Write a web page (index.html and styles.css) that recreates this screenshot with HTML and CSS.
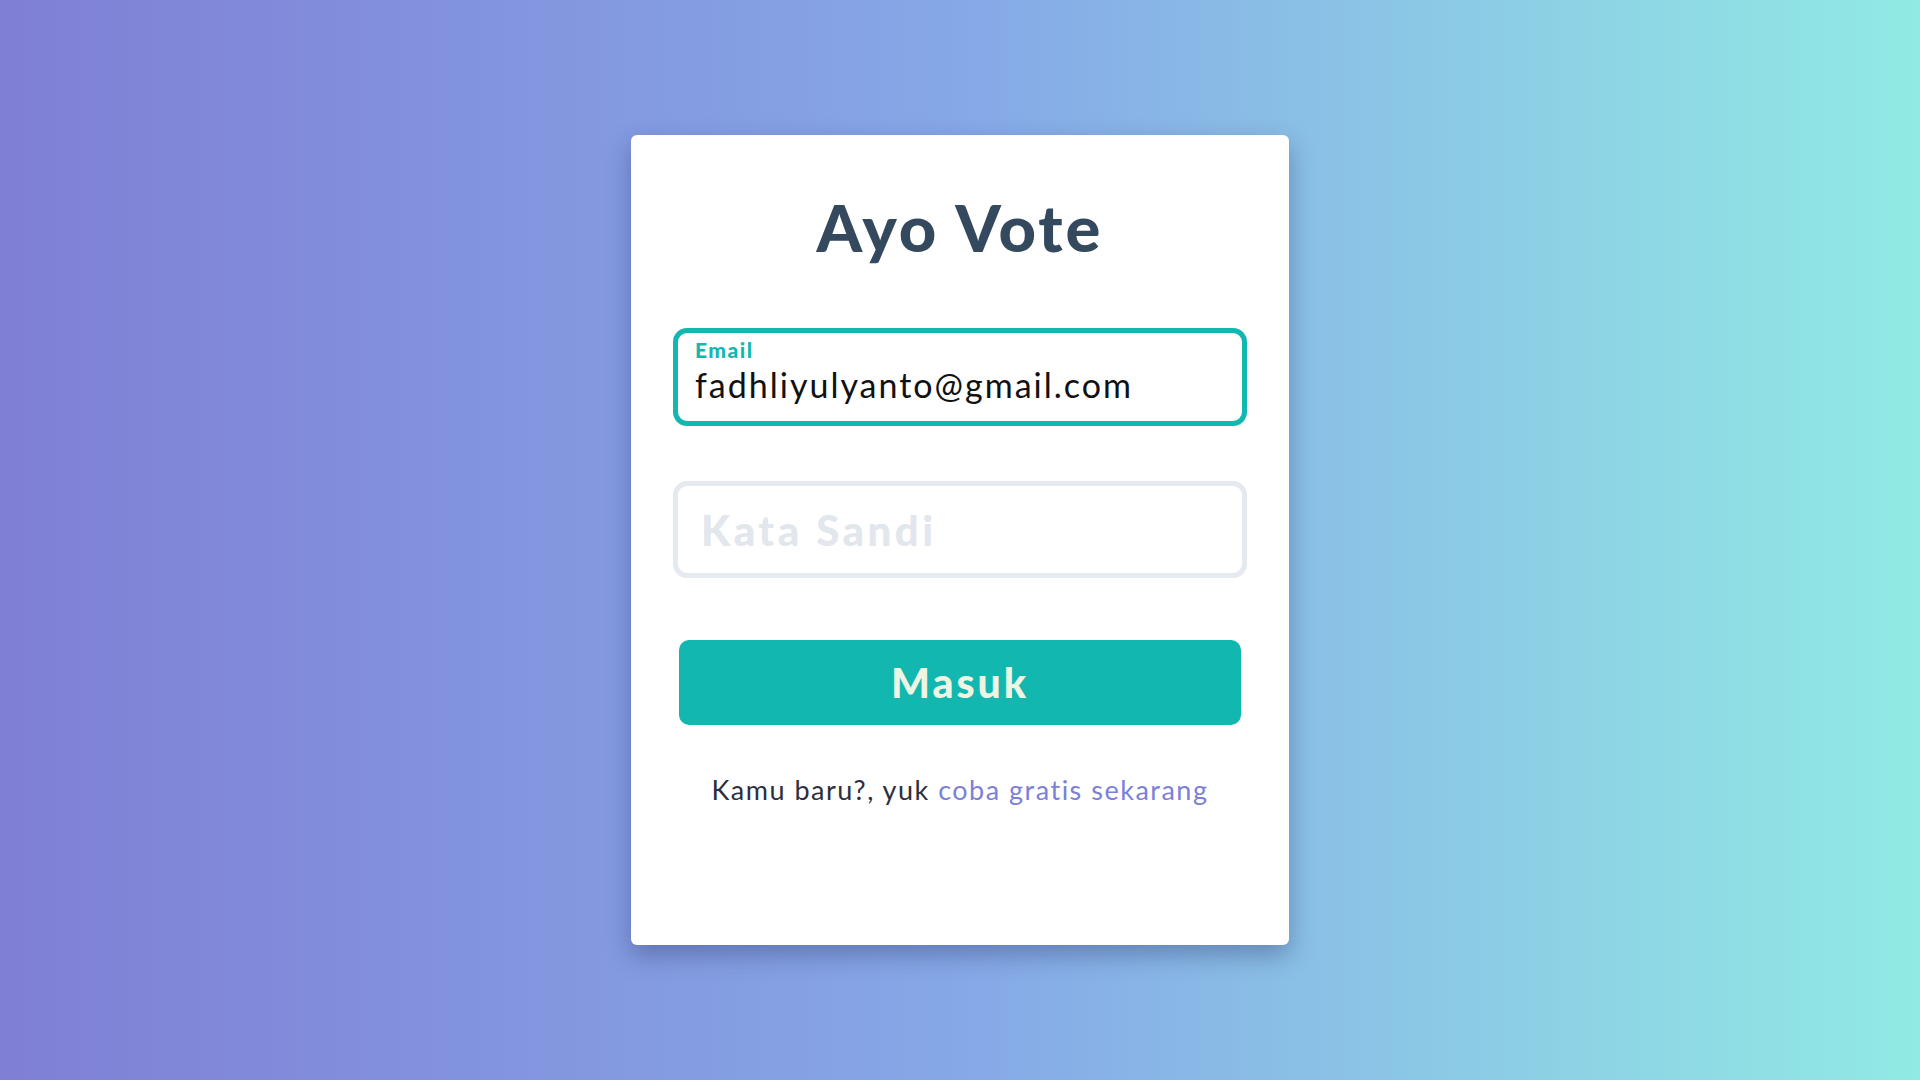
FILE: index.html
```html
<!DOCTYPE html>
<html lang="id">
<head>
<meta charset="utf-8">
<title>Ayo Vote</title>
<link rel="stylesheet" href="styles.css">
</head>
<body>
<main class="page">
  <form class="card" onsubmit="return false">
    <h1 class="title">Ayo Vote</h1>
    <div class="field field--active">
      <label class="field__label" for="email">Email</label>
      <input class="field__input" id="email" type="email" value="fadhliyulyanto@gmail.com">
    </div>
    <div class="field field--empty">
      <input class="field__input field__input--big" id="password" type="password" placeholder="Kata Sandi">
    </div>
    <button class="btn" type="submit">Masuk</button>
    <p class="signup">Kamu baru?, yuk <a class="signup__link" href="#">coba gratis sekarang</a></p>
  </form>
</main>
</body>
</html>
```
FILE: styles.css
```css
* { box-sizing: border-box; }
html, body { margin: 0; padding: 0; }
body {
  font-family: Lato, "Open Sans", sans-serif;
  background: linear-gradient(to right, #7f7fd5, #86a8e7, #91eae4);
  min-height: 100vh;
}
.page {
  height: 100vh;
  display: flex;
  align-items: center;
  justify-content: center;
}
.card {
  width: 658px;
  height: 810px;
  background: #fff;
  border-radius: 6px;
  box-shadow: 0 10px 25px rgba(30, 40, 90, 0.35);
  padding: 0 42px;
  display: flex;
  flex-direction: column;
  margin: 0;
}
.title {
  margin: 52px 0 0;
  font-size: 65px;
  line-height: 80px;
  font-weight: 900;
  letter-spacing: 3px;
  color: #34495e;
  text-align: center;
}
.field {
  height: 98px;
  border: 5px solid #e5e9f0;
  border-radius: 14px;
  display: flex;
  flex-direction: column;
  justify-content: center;
}
.field--active {
  margin-top: 61px;
  border-color: #12b8b0;
  justify-content: flex-start;
  padding: 5px 17px 0;
}
.field--empty {
  margin-top: 55px;
  height: 97px;
  padding: 0 23px;
}
.field__label {
  font-size: 21px;
  line-height: 24px;
  font-weight: 900;
  letter-spacing: 1.5px;
  color: #12b8b0;
}
.field__input {
  border: 0;
  outline: 0;
  padding: 0;
  margin-top: 3px;
  font-family: inherit;
  font-size: 34px;
  line-height: 40px;
  height: 40px;
  letter-spacing: 2px;
  color: #111;
  background: transparent;
  width: 100%;
}
.field__input--big {
  margin-top: 0;
  font-size: 42px;
  height: 50px;
  line-height: 50px;
  font-weight: 900;
  letter-spacing: 3.5px;
}
.field__input--big::placeholder {
  color: #e2e6ed;
  opacity: 1;
}
.btn {
  margin: 62px 6px 0;
  height: 85px;
  border: 0;
  border-radius: 10px;
  background: #12b8b0;
  color: #eef5e2;
  font-family: inherit;
  font-size: 41px;
  font-weight: 900;
  letter-spacing: 3px;
  cursor: pointer;
}
.signup {
  margin: 49px 0 0;
  font-size: 27px;
  line-height: 32px;
  letter-spacing: 1.5px;
  color: #2e2f3e;
  text-align: center;
}
.signup__link {
  color: #7b80d8;
  text-decoration: none;
}
```
